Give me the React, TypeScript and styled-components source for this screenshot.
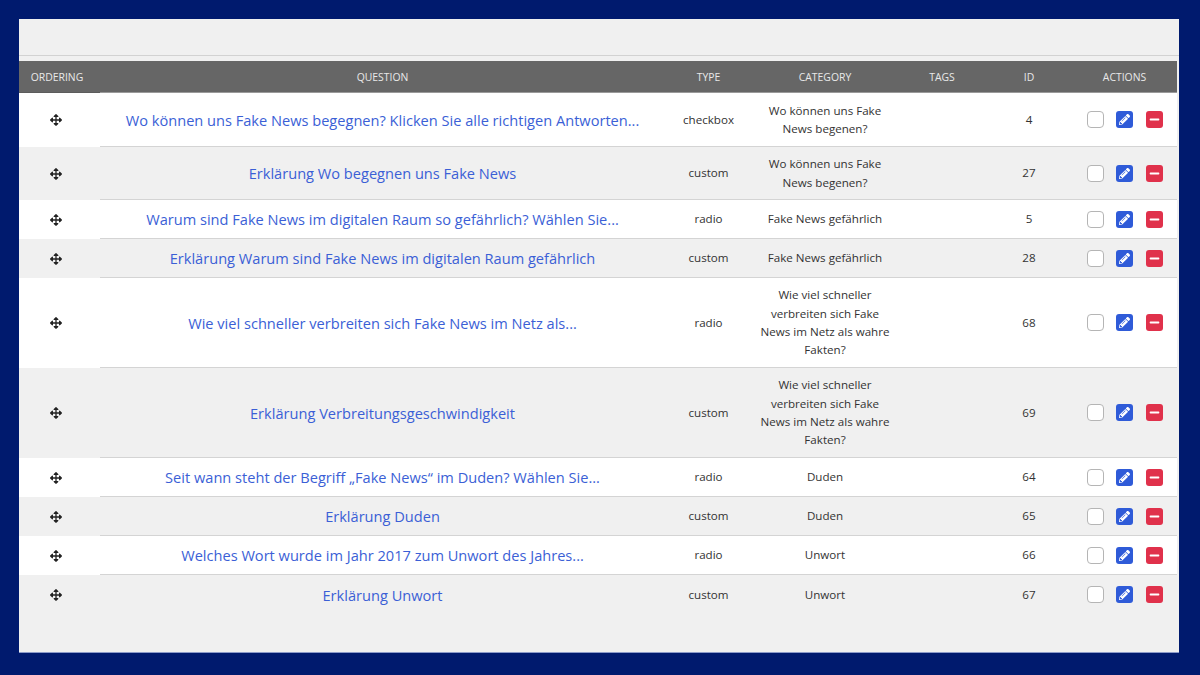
import React from "react";
import styled, { createGlobalStyle } from "styled-components";
import { FaArrowsAlt, FaPencilAlt, FaMinus } from "react-icons/fa";

const GlobalStyle = createGlobalStyle`
  html, body { margin: 0; padding: 0; }
  body {
    background: #001a6e;
    font-family: "Open Sans", "Noto Sans", "Liberation Sans", sans-serif;
  }
`;

const COLUMNS = "81px 565px 87px 146px 88px 86px 105px";

const Page = styled.div`
  width: 1200px;
  height: 675px;
  padding: 19px 21px 22px 19px;
  box-sizing: border-box;
  overflow: hidden;
`;

const Panel = styled.div`
  height: 634px;
  background: #f0f0f0;
  border-bottom: 1px solid #8d9cc9;
  box-sizing: border-box;
  padding-right: 2px;
`;

const Toolbar = styled.div`
  height: 37px;
  margin-right: -2px;
  border-bottom: 1px solid #d2d2d2;
  box-sizing: border-box;
  margin-bottom: 5px;
`;

const HeaderRow = styled.div`
  display: grid;
  grid-template-columns: ${COLUMNS};
  height: 32px;
  background: #666666;
`;

const HeaderCell = styled.div`
  display: flex;
  align-items: center;
  justify-content: center;
  color: #e9e9e9;
  font-size: 10.4px;
  border-bottom: 1px solid #9a9a9a;
  box-sizing: border-box;

  &:first-child {
    border-bottom-color: #5c5c5c;
    padding-right: 5px;
  }
`;

const Row = styled.div<{ $height: number; $odd: boolean }>`
  display: grid;
  grid-template-columns: ${COLUMNS};
  height: ${(p) => p.$height}px;
  background: ${(p) => (p.$odd ? "#ffffff" : "#f0f0f0")};

  &:last-child > div {
    border-bottom: none;
  }
`;

const Cell = styled.div`
  display: flex;
  align-items: center;
  justify-content: center;
  text-align: center;
  border-bottom: 1px solid #d4d4d4;
  box-sizing: border-box;
  color: #333;
  font-size: 11.6px;
  line-height: 18.4px;
  padding-top: 1px;
`;

const HandleCell = styled(Cell)`
  border-bottom: none;
  color: #222;
  font-size: 12px;
  padding: 0 7px 0 0;
`;

const QuestionCell = styled(Cell)`
  font-size: 14.6px;
  color: #3b5fd6;
`;

const CategoryCell = styled(Cell)`
  padding: 1px 7px 0;
`;

const ActionsCell = styled(Cell)`
  padding: 0 0 0 0;
  gap: 12px;
`;

const CheckBox = styled.span`
  width: 17px;
  height: 17px;
  box-sizing: border-box;
  border: 1.5px solid #b5b5b5;
  border-radius: 4px;
  background: #fff;
`;

const ActionButton = styled.span<{ $color: string; $gap: number }>`
  width: 17px;
  height: 17px;
  margin-left: ${(p) => p.$gap}px;
  border-radius: 3px;
  background: ${(p) => p.$color};
  color: #fff;
  display: flex;
  align-items: center;
  justify-content: center;
  font-size: 11px;
`;

const rows = [
  { h: 54, q: "Wo können uns Fake News begegnen? Klicken Sie alle richtigen Antworten...", t: "checkbox", c: "Wo können uns Fake News begenen?", id: 4 },
  { h: 53, q: "Erklärung Wo begegnen uns Fake News", t: "custom", c: "Wo können uns Fake News begenen?", id: 27 },
  { h: 39, q: "Warum sind Fake News im digitalen Raum so gefährlich? Wählen Sie...", t: "radio", c: "Fake News gefährlich", id: 5 },
  { h: 39, q: "Erklärung Warum sind Fake News im digitalen Raum gefährlich", t: "custom", c: "Fake News gefährlich", id: 28 },
  { h: 90, q: "Wie viel schneller verbreiten sich Fake News im Netz als...", t: "radio", c: "Wie viel schneller verbreiten sich Fake News im Netz als wahre Fakten?", id: 68 },
  { h: 90, q: "Erklärung Verbreitungsgeschwindigkeit", t: "custom", c: "Wie viel schneller verbreiten sich Fake News im Netz als wahre Fakten?", id: 69 },
  { h: 39, q: "Seit wann steht der Begriff „Fake News“ im Duden? Wählen Sie...", t: "radio", c: "Duden", id: 64 },
  { h: 39, q: "Erklärung Duden", t: "custom", c: "Duden", id: 65 },
  { h: 39, q: "Welches Wort wurde im Jahr 2017 zum Unwort des Jahres...", t: "radio", c: "Unwort", id: 66 },
  { h: 39, q: "Erklärung Unwort", t: "custom", c: "Unwort", id: 67 },
];

const headers = ["ORDERING", "QUESTION", "TYPE", "CATEGORY", "TAGS", "ID", "ACTIONS"];

export default function App() {
  return (
    <Page>
      <GlobalStyle />
      <Panel>
        <Toolbar />
        <HeaderRow>
          {headers.map((h) => (
            <HeaderCell key={h}>{h}</HeaderCell>
          ))}
        </HeaderRow>
        {rows.map((r, i) => (
          <Row key={r.id} $height={r.h} $odd={i % 2 === 0}>
            <HandleCell>
              <FaArrowsAlt />
            </HandleCell>
            <QuestionCell>{r.q}</QuestionCell>
            <Cell>{r.t}</Cell>
            <CategoryCell>{r.c}</CategoryCell>
            <Cell />
            <Cell>{r.id}</Cell>
            <ActionsCell>
              <CheckBox />
              <ActionButton $color="#2f5bd8" $gap={0}>
                <FaPencilAlt />
              </ActionButton>
              <ActionButton $color="#e0314b" $gap={1}>
                <FaMinus />
              </ActionButton>
            </ActionsCell>
          </Row>
        ))}
      </Panel>
    </Page>
  );
}
